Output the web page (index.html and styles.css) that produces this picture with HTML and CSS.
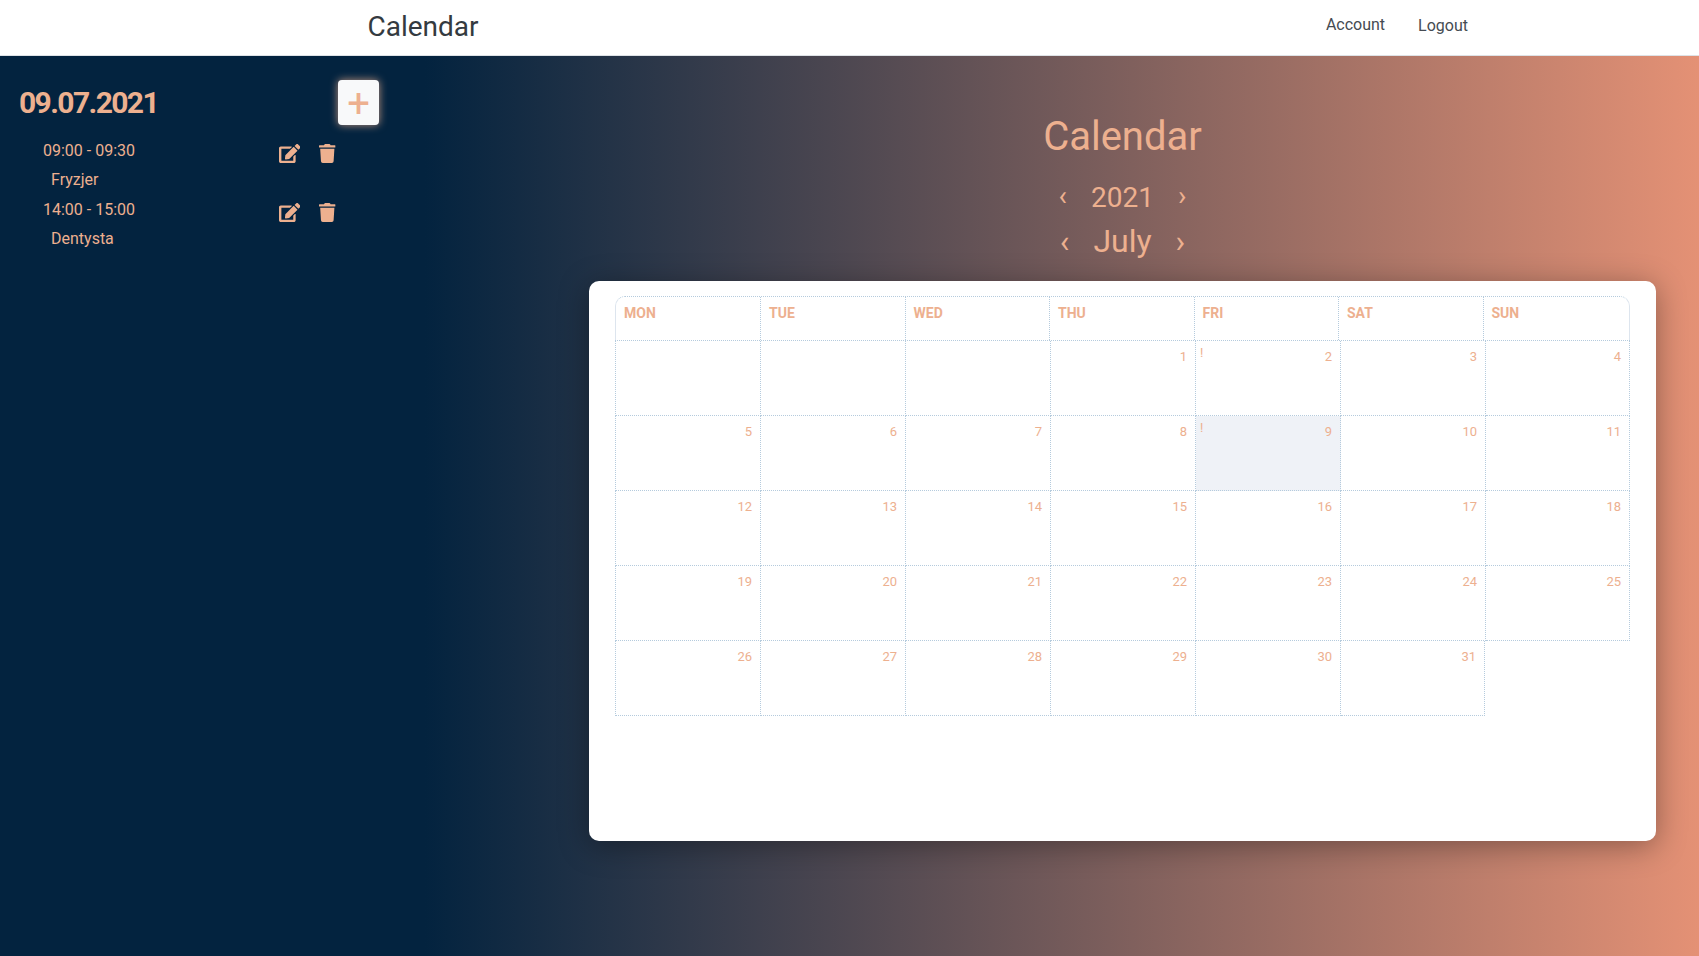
FILE: index.html
```html
<!DOCTYPE html>
<html lang="en">
<head>
    <meta charset="UTF-8">
    <meta name="viewport" content="width=device-width, initial-scale=1.0">
    <title>Calendar</title>
    <link rel="stylesheet" href="styles.css">
</head>
<body>

    <svg class="icon-defs" aria-hidden="true">
        <symbol id="icon-edit" viewBox="0 0 576 512">
            <path d="M402.6 83.2l90.2 90.2c3.8 3.8 3.8 10 0 13.8L274.4 405.6l-92.8 10.3c-12.4 1.4-22.9-9.1-21.5-21.5l10.3-92.8L388.8 83.2c3.8-3.8 10-3.8 13.8 0zm162-22.9l-48.8-48.8c-15.2-15.2-39.9-15.2-55.2 0l-35.4 35.4c-3.8 3.8-3.8 10 0 13.8l90.2 90.2c3.8 3.8 10 3.8 13.8 0l35.4-35.4c15.2-15.3 15.2-40 0-55.2zM384 346.2V448H64V128h229.8c3.2 0 6.2-1.3 8.5-3.5l40-40c7.6-7.6 2.2-20.5-8.5-20.5H48C21.5 64 0 85.5 0 112v352c0 26.5 21.5 48 48 48h352c26.5 0 48-21.5 48-48V306.2c0-10.7-12.9-16-20.5-8.5l-40 40c-2.2 2.3-3.5 5.3-3.5 8.5z"/>
        </symbol>
        <symbol id="icon-trash" viewBox="0 0 448 512">
            <path d="M432 32H312l-9.4-18.7A24 24 0 0 0 281.1 0H166.8a23.72 23.72 0 0 0-21.4 13.3L136 32H16A16 16 0 0 0 0 48v32a16 16 0 0 0 16 16h416a16 16 0 0 0 16-16V48a16 16 0 0 0-16-16zM53.2 467a48 48 0 0 0 47.9 45h245.8a48 48 0 0 0 47.9-45L416 128H32z"/>
        </symbol>
    </svg>

    <!-- Top Navbar -->
    <nav class="navbar">
        <a class="brand" href="#">Calendar</a>
        <div class="nav-links">
            <a href="#">Account</a>
            <a class="logout" href="#">Logout</a>
        </div>
    </nav>

    <main class="page">
        <!-- Day Details -->
        <aside class="day-panel">
            <div class="day-head">
                <h3>09.07.2021</h3>
                <button class="add-btn" type="button">+</button>
            </div>

            <div class="event">
                <div class="event-text">
                    <div class="event-time">09:00 - 09:30</div>
                    <div class="event-name">Fryzjer</div>
                </div>
                <div class="event-actions">
                    <svg class="icon-edit"><use href="#icon-edit"/></svg>
                    <svg class="icon-trash"><use href="#icon-trash"/></svg>
                </div>
            </div>

            <div class="event">
                <div class="event-text">
                    <div class="event-time">14:00 - 15:00</div>
                    <div class="event-name">Dentysta</div>
                </div>
                <div class="event-actions">
                    <svg class="icon-edit"><use href="#icon-edit"/></svg>
                    <svg class="icon-trash"><use href="#icon-trash"/></svg>
                </div>
            </div>
        </aside>

        <!-- Calendar -->
        <section class="calendar">
            <h1>Calendar</h1>
            <div class="switcher year-switch">
                <a href="#">‹</a>
                <span>2021</span>
                <a href="#">›</a>
            </div>
            <div class="switcher month-switch">
                <a href="#">‹</a>
                <span>July</span>
                <a href="#">›</a>
            </div>

            <div class="calendar-card">
                <div class="weekdays">
                    <div>MON</div>
                    <div>TUE</div>
                    <div>WED</div>
                    <div>THU</div>
                    <div>FRI</div>
                    <div>SAT</div>
                    <div>SUN</div>
                </div>
                <div class="days">
                    <div class="day"></div>
                    <div class="day"></div>
                    <div class="day"></div>
                    <div class="day"><span></span><span>1</span></div>
                    <div class="day"><span class="mark">!</span><span>2</span></div>
                    <div class="day"><span></span><span>3</span></div>
                    <div class="day"><span></span><span>4</span></div>
                    <div class="day"><span></span><span>5</span></div>
                    <div class="day"><span></span><span>6</span></div>
                    <div class="day"><span></span><span>7</span></div>
                    <div class="day"><span></span><span>8</span></div>
                    <div class="day selected"><span class="mark">!</span><span>9</span></div>
                    <div class="day"><span></span><span>10</span></div>
                    <div class="day"><span></span><span>11</span></div>
                    <div class="day"><span></span><span>12</span></div>
                    <div class="day"><span></span><span>13</span></div>
                    <div class="day"><span></span><span>14</span></div>
                    <div class="day"><span></span><span>15</span></div>
                    <div class="day"><span></span><span>16</span></div>
                    <div class="day"><span></span><span>17</span></div>
                    <div class="day"><span></span><span>18</span></div>
                    <div class="day"><span></span><span>19</span></div>
                    <div class="day"><span></span><span>20</span></div>
                    <div class="day"><span></span><span>21</span></div>
                    <div class="day"><span></span><span>22</span></div>
                    <div class="day"><span></span><span>23</span></div>
                    <div class="day"><span></span><span>24</span></div>
                    <div class="day"><span></span><span>25</span></div>
                    <div class="day"><span></span><span>26</span></div>
                    <div class="day"><span></span><span>27</span></div>
                    <div class="day"><span></span><span>28</span></div>
                    <div class="day"><span></span><span>29</span></div>
                    <div class="day"><span></span><span>30</span></div>
                    <div class="day last-day"><span></span><span>31</span></div>
                </div>
            </div>
        </section>
    </main>

</body>
</html>
```

FILE: styles.css
```css
* {
    box-sizing: border-box;
}

body {
    font-family: Roboto, sans-serif;
    margin: 0;
    height: 956px;
    overflow: hidden;
    color: #edb08f;
}

a {
    color: inherit;
    text-decoration: none;
}

.icon-defs {
    display: none;
}

.navbar {
    display: flex;
    justify-content: space-between;
    align-items: center;
    height: 56px;
    padding: 0 231px 0 367.5px;
    background-color: #fff;
    border-bottom: 1px solid #dee2e6;
}

.brand {
    margin-top: -2px;
    font-size: 28px;
    color: #343a40;
}

.nav-links {
    display: flex;
    gap: 33px;
    margin-top: -6px;
    font-size: 16px;
    color: #454b52;
}

.logout {
    margin-top: 1px;
}

.page {
    display: flex;
    height: 900px;
    background: linear-gradient(90deg, #03233f 25%, #e49175 100%);
}

.day-panel {
    width: 589px;
    padding-top: 24px;
}

.day-head {
    display: flex;
    justify-content: space-between;
    align-items: center;
    width: 379px;
    padding-left: 19px;
    margin-bottom: 14px;
}

.day-head h3 {
    margin: 0;
    font-size: 30px;
    font-weight: 700;
    letter-spacing: -1.6px;
}

.add-btn {
    width: 41px;
    height: 45px;
    padding: 0;
    border: none;
    border-radius: 4px;
    background-color: #f8f9fa;
    box-shadow: 0 0 8px rgba(237, 176, 143, 0.8);
    color: #edb08f;
    font-family: Roboto, sans-serif;
    font-size: 40px;
    line-height: 47px;
}

.event {
    display: flex;
    font-size: 16px;
    line-height: 24px;
}

.event-text {
    width: 279px;
    padding-left: 43px;
}

.event-name {
    margin-top: 5px;
    padding-left: 8px;
}

.event-actions {
    display: flex;
    gap: 19px;
    height: 59px;
    padding-top: 5px;
}

.event-actions svg {
    height: 19px;
    fill: #edb08f;
}

.icon-edit {
    width: 21.4px;
}

.icon-trash {
    width: 16.6px;
}

.calendar {
    width: 1067px;
    padding-top: 57px;
}

.calendar h1 {
    margin: 0 0 16px;
    font-size: 40px;
    font-weight: 400;
    line-height: 48px;
    text-align: center;
}

.switcher {
    display: flex;
    justify-content: center;
    gap: 24px;
}

.year-switch {
    font-size: 28px;
    line-height: 41px;
}

.year-switch a {
    margin-top: -2px;
}

.month-switch {
    font-size: 32px;
    line-height: 46px;
    margin-bottom: 17px;
}

.calendar-card {
    height: 560px;
    padding: 15px 26px;
    background-color: #fff;
    border-radius: 10px;
    box-shadow: 0 5px 30px rgba(0, 0, 0, 0.35);
}

.weekdays {
    display: grid;
    grid-template-columns: 144px repeat(5, 144.5px) 146px;
    height: 44px;
    border-top: 1px dotted #b5cbdd;
    border-left: 1px solid #dde5ee;
    border-right: 1px solid #dde5ee;
    border-radius: 10px 10px 0 0;
    font-size: 14px;
    font-weight: 700;
    line-height: 33px;
}

.weekdays div {
    padding-left: 8px;
    border-left: 1px dotted #b5cbdd;
}

.weekdays div:first-child {
    border-left: none;
}

.days {
    display: grid;
    grid-template-columns: 146px repeat(5, 145px) 144px;
    grid-auto-rows: 75px;
    border-top: 1px dotted #b5cbdd;
}

.day {
    display: flex;
    justify-content: space-between;
    padding: 6px 8px 0 4px;
    border-right: 1px dotted #b5cbdd;
    border-bottom: 1px dotted #b5cbdd;
    font-size: 13px;
    line-height: 20px;
}

.day:nth-child(7n + 1) {
    border-left: 1px dotted #b5cbdd;
}

.day.selected {
    background-color: #eff2f7;
}

.last-day {
    margin-right: 1px;
}

.mark {
    font-size: 13px;
    line-height: 12px;
}
```
